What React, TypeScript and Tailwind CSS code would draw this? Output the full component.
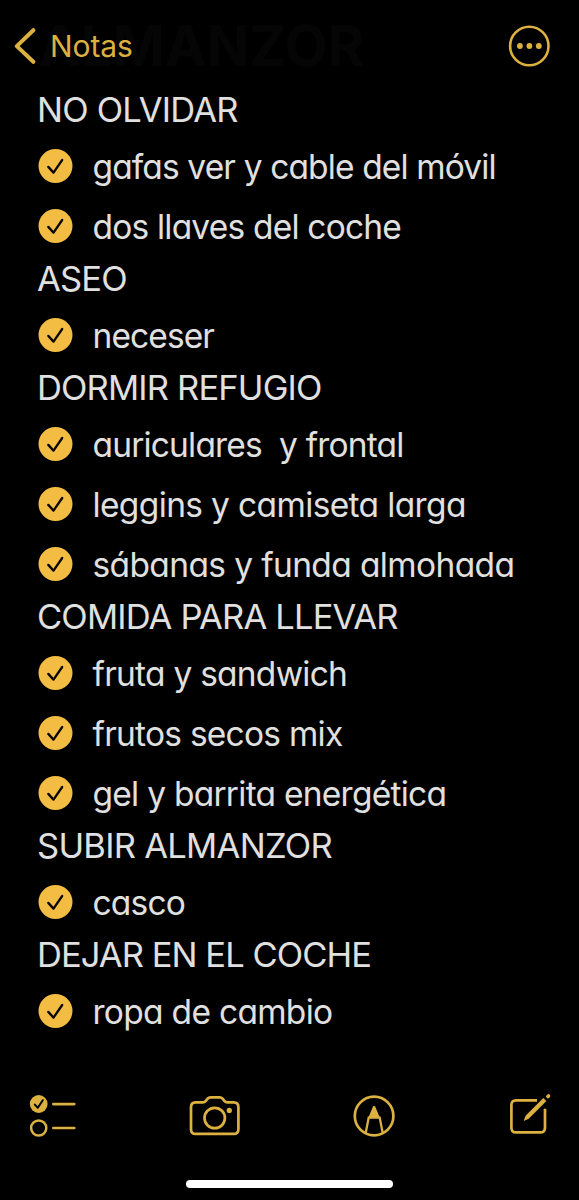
const GOLD = '#dcb140';

type Line = { text: string; tracking: string };
type Section = { title: Line; items: Line[] };

const sections: Section[] = [
  {
    title: { text: 'NO OLVIDAR', tracking: 'tracking-[-0.78px]' },
    items: [
      { text: 'gafas ver y cable del móvil', tracking: 'tracking-[-0.87px]' },
      { text: 'dos llaves del coche', tracking: 'tracking-[-0.8px]' },
    ],
  },
  {
    title: { text: 'ASEO', tracking: 'tracking-[-0.8px]' },
    items: [{ text: 'neceser', tracking: 'tracking-[-0.9px]' }],
  },
  {
    title: { text: 'DORMIR REFUGIO', tracking: 'tracking-[-0.83px]' },
    items: [
      { text: 'auriculares  y frontal', tracking: 'tracking-[-0.82px]' },
      { text: 'leggins y camiseta larga', tracking: 'tracking-[-0.64px]' },
      { text: 'sábanas y funda almohada', tracking: 'tracking-[-0.62px]' },
    ],
  },
  {
    title: { text: 'COMIDA PARA LLEVAR', tracking: 'tracking-[-0.83px]' },
    items: [
      { text: 'fruta y sandwich', tracking: 'tracking-[-0.75px]' },
      { text: 'frutos secos mix', tracking: 'tracking-[-0.75px]' },
      { text: 'gel y barrita energética', tracking: 'tracking-[-0.74px]' },
    ],
  },
  {
    title: { text: 'SUBIR ALMANZOR', tracking: 'tracking-[-0.72px]' },
    items: [{ text: 'casco', tracking: 'tracking-[-0.8px]' }],
  },
  {
    title: { text: 'DEJAR EN EL COCHE', tracking: 'tracking-[-0.94px]' },
    items: [{ text: 'ropa de cambio', tracking: 'tracking-[-0.7px]' }],
  },
];

function CheckBadge() {
  return (
    <svg className="mt-[4px] h-[34px] w-[35px] shrink-0" viewBox="0 0 35 34" fill="none">
      <circle cx="17.5" cy="17" r="17" fill="#f3bc42" />
      <path d="M10.3 17.9 15.5 23.6 24.2 11" stroke="#0b0800" strokeWidth="2.3" strokeLinecap="round" strokeLinejoin="round" />
    </svg>
  );
}

function Header() {
  return (
    <header className="relative flex h-[85px] shrink-0 items-start">
      <div className="absolute left-[39px] top-[15px] text-[56px] leading-[62px] font-bold tracking-[0px] text-[#050505]">
        ALMANZOR
      </div>
      <button className="relative flex h-[92px] items-center pl-[14px]">
        <svg className="h-[38px] w-[23px]" viewBox="0 0 23 38" fill="none">
          <path d="M19.3 3.2 2.8 19.1 19.3 34.8" stroke={GOLD} strokeWidth="4" strokeLinecap="round" strokeLinejoin="round" />
        </svg>
        <span className="ml-[13px] text-[30px] leading-[36px] tracking-[-0.1px] text-[#dcb140]">Notas</span>
      </button>
      <svg className="relative mt-[25px] mr-[29px] ml-auto h-[42px] w-[42px]" viewBox="0 0 42 42" fill="none">
        <circle cx="21.3" cy="21" r="19.2" stroke={GOLD} strokeWidth="2.6" />
        <circle cx="11.9" cy="21" r="2.9" fill={GOLD} />
        <circle cx="21.4" cy="21" r="2.9" fill={GOLD} />
        <circle cx="30.8" cy="21" r="2.9" fill={GOLD} />
      </svg>
    </header>
  );
}

function Toolbar() {
  return (
    <footer className="flex h-[60px] shrink-0 items-start pl-[28px]">
      <svg className="h-[60px] w-[50px]" viewBox="28 1085 50 60" fill="none" stroke={GOLD}>
        <circle cx="38.7" cy="1104" r="8.9" fill={GOLD} stroke="none" />
        <path d="m34.8 1104.6 3 3.2 5-7.6" stroke="#000" strokeWidth="2" strokeLinecap="round" strokeLinejoin="round" />
        <circle cx="38.7" cy="1128" r="7.6" strokeWidth="2.5" />
        <path d="M53.3 1104.1h21M53.3 1128h21" strokeWidth="2.6" strokeLinecap="round" />
      </svg>
      <svg className="ml-[110px] h-[60px] w-[54px]" viewBox="188 1085 54 60" fill="none" stroke={GOLD}>
        <path d="M195.6 1102.4h7.2c1.4 0 2.3-.5 3.1-1.5l1.7-2.2c.8-1 1.7-1.4 3-1.4h9c1.3 0 2.2.4 3 1.4l1.7 2.2c.8 1 1.7 1.5 3.1 1.5h6.2c3 0 4.8 1.7 4.8 4.7v22.1c0 3-1.8 4.7-4.8 4.7h-38c-3 0-4.6-1.7-4.6-4.7v-22.1c0-3 1.6-4.7 4.6-4.7Z" strokeWidth="2.7" />
        <circle cx="214.7" cy="1118" r="10.2" strokeWidth="2.7" />
        <circle cx="229.3" cy="1110.4" r="2.6" fill={GOLD} stroke="none" />
      </svg>
      <svg className="ml-[109px] h-[60px] w-[46px]" viewBox="351 1085 46 60" fill="none" stroke={GOLD}>
        <circle cx="374.1" cy="1116" r="19.3" strokeWidth="2.7" />
        <path d="M365.7 1133 368.7 1117.6H379.7L382.7 1133" strokeWidth="2.3" />
        <path d="M368.2 1118 372.9 1106.8q1.2-2 2.4 0L380 1118Z" fill={GOLD} stroke="none" />
      </svg>
      <svg className="ml-[111px] h-[60px] w-[44px]" viewBox="508 1085 44 60" fill="none" stroke={GOLD}>
        <path d="M537 1100.3h-21c-3 0-4.6 1.7-4.6 4.7v22.7c0 3 1.6 4.7 4.6 4.7h24.2c3 0 4.8-1.7 4.8-4.7v-19" strokeWidth="2.7" strokeLinecap="butt" />
        <path d="m523.6 1121 2-5.3 17.7-17.8 3.1 3.1-17.7 17.8Z" fill={GOLD} stroke="none" />
        <path d="m547.9 1096.6.6-.6" strokeWidth="3.6" strokeLinecap="round" />
      </svg>
    </footer>
  );
}

export default function App() {
  return (
    <div className="flex h-[1200px] w-[579px] flex-col overflow-hidden bg-black font-['Inter',sans-serif]">
      <Header />
      <main className="flex h-[1000px] shrink-0 flex-col whitespace-pre text-[#e0e0e0]">
        {sections.map((section) => (
          <section key={section.title.text}>
            <h2 className={`flex h-[48.7px] items-center pt-[1px] pl-[37px] text-[34.5px] font-normal ${section.title.tracking}`}>
              {section.title.text}
            </h2>
            <ul className="text-[33.5px] [font-feature-settings:'cv11']">
              {section.items.map((item) => (
                <li key={item.text} className="flex h-[60.2px] items-center pl-[38px]">
                  <CheckBadge />
                  <span className={`mt-[6px] ml-[19.5px] ${item.tracking}`}>{item.text}</span>
                </li>
              ))}
            </ul>
          </section>
        ))}
      </main>
      <Toolbar />
      <div className="mt-[35px] ml-[186px] h-[8px] w-[207px] shrink-0 rounded-full bg-white" />
    </div>
  );
}
